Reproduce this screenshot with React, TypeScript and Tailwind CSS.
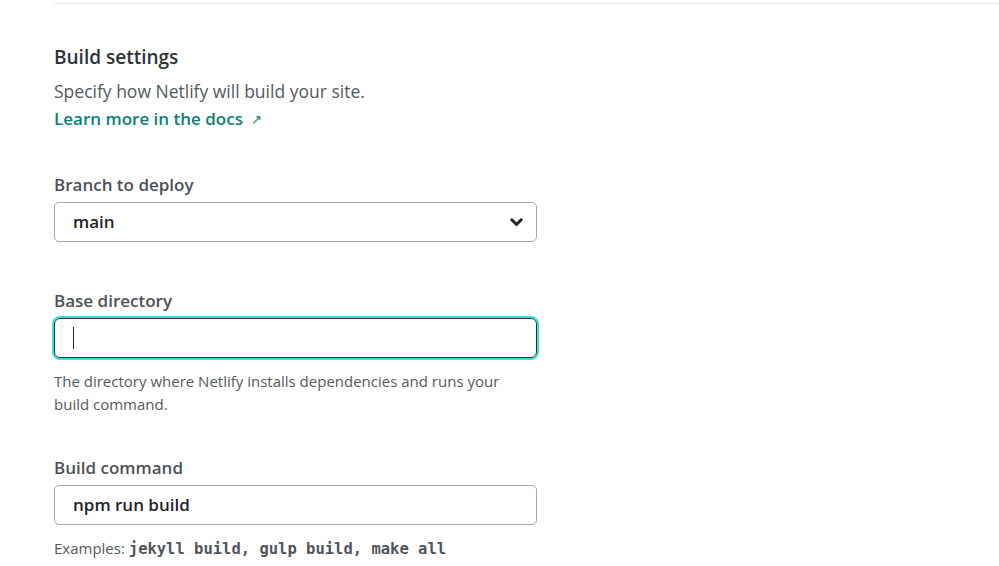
const font = { fontFamily: '"Open Sans", "Noto Sans", sans-serif' };
const mono = { fontFamily: '"DejaVu Sans Mono", "Liberation Mono", monospace' };

function Chevron() {
  return (
    <svg width="13" height="9" viewBox="0 0 13 9" fill="none" className="text-[#1f2328]">
      <path
        d="M1.8 1.8 L6.5 6.5 L11.2 1.8"
        stroke="currentColor"
        strokeWidth="3"
        strokeLinecap="round"
        strokeLinejoin="round"
      />
    </svg>
  );
}

export default function App() {
  return (
    <div className="min-h-screen bg-white text-[#2e3338]" style={font}>
      <div className="ml-[54px] pt-[3px]">
        <section className="border-t border-[#e8e8e8] pt-[39px]">
          <h2 className="text-[19px] leading-[28px] font-semibold text-[#2e3338]">
            Build settings
          </h2>
          <p className="mt-[7px] text-[17.5px] leading-[27px] text-[#545a61]">
            Specify how Netlify will build your site.
          </p>
          <a
            href="#"
            className="mt-[1px] flex items-center gap-[8px] text-[17px] leading-[26px] font-semibold text-[#0d7f7a]"
          >
            Learn more in the docs
            <span className="text-[13px] font-normal">↗</span>
          </a>

          <div className="w-[483px] mt-[41px]">
            {/* Branch to deploy */}
            <label className="block text-[17px] leading-[24px] font-semibold text-[#4d5257]">
              Branch to deploy
            </label>
            <div className="mt-[5px] h-[40px] rounded-[5px] border border-[#a3a9ae] flex items-center justify-between pl-[18px] pr-[13px]">
              <span className="text-[17px] font-semibold text-[#1f2328]">main</span>
              <Chevron />
            </div>

            {/* Base directory */}
            <label className="mt-[47px] block text-[17px] leading-[24px] font-semibold text-[#4d5257]">
              Base directory
            </label>
            <div className="mt-[5px] h-[40px] rounded-[6px] border border-[#2e3338] ring-2 ring-[#33e0dc] flex items-center pl-[18px]">
              <span className="block w-[1px] h-[22px] bg-[#1f2328]" />
            </div>
            <p className="mt-[12px] text-[15px] leading-[23px] text-[#545a61] pr-[20px]">
              The directory where Netlify installs dependencies and runs your build command.
            </p>

            {/* Build command */}
            <label className="mt-[40px] block text-[17px] leading-[24px] font-semibold text-[#4d5257]">
              Build command
            </label>
            <div className="mt-[5px] h-[40px] rounded-[5px] border border-[#a3a9ae] flex items-center pl-[18px]">
              <span className="text-[17px] font-semibold text-[#1f2328]">npm run build</span>
            </div>
            <p className="mt-[12px] text-[15px] leading-[22px] text-[#545a61] whitespace-nowrap">
              Examples:{" "}
              <code className="text-[15.5px] font-semibold text-[#4f555b]" style={mono}>
                jekyll build, gulp build, make all
              </code>
            </p>
          </div>
        </section>
      </div>
    </div>
  );
}
